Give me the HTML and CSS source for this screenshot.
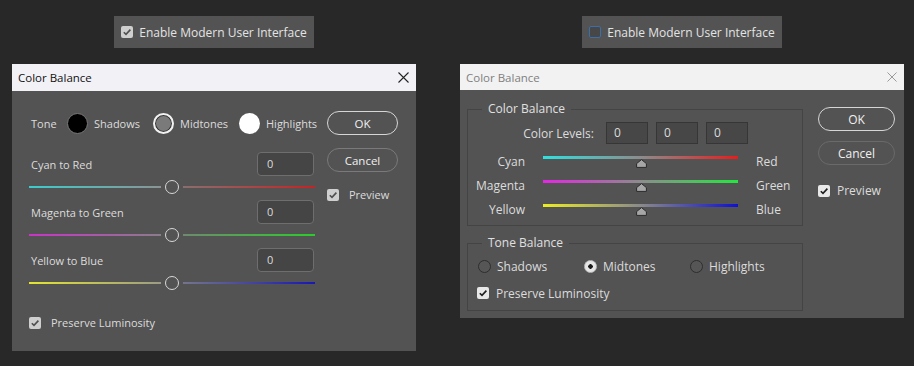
FILE: index.html
```html
<!DOCTYPE html>
<html lang="en">
<head>
    <meta charset="UTF-8">
    <title>Color Balance</title>
    <link rel="stylesheet" href="styles.css">
</head>
<body>

<!-- new look -->
<div class="col">
    <div class="ui-toggle">
        <span class="cb cb-on"><svg viewBox="0 0 12 12"><polyline points="2.8,6.2 5,8.4 9.4,3.6"/></svg></span>
        Enable Modern User Interface
    </div>

    <div class="dlg dlg-modern">
        <div class="titlebar">
            <span>Color Balance</span>
            <svg class="close" viewBox="0 0 11 11"><path d="M0.5 0.5 L10.5 10.5 M10.5 0.5 L0.5 10.5"/></svg>
        </div>
        <div class="dlg-body">
            <div class="main">
                <div class="tone-row">
                    <span class="tone-label">Tone</span>
                    <span class="tone"><span class="dot dot-black"></span>Shadows</span>
                    <span class="tone"><span class="dot dot-mid"></span>Midtones</span>
                    <span class="tone"><span class="dot dot-white"></span>Highlights</span>
                </div>

                <div class="field-row">
                    <span>Cyan to Red</span>
                    <span class="num">0</span>
                </div>
                <div class="slider cr"><span class="knob"></span></div>

                <div class="field-row">
                    <span>Magenta to Green</span>
                    <span class="num">0</span>
                </div>
                <div class="slider mg"><span class="knob"></span></div>

                <div class="field-row">
                    <span>Yellow to Blue</span>
                    <span class="num">0</span>
                </div>
                <div class="slider yb"><span class="knob"></span></div>

                <div class="check-row lum">
                    <span class="cb cb-on"><svg viewBox="0 0 12 12"><polyline points="2.8,6.2 5,8.4 9.4,3.6"/></svg></span>
                    Preserve Luminosity
                </div>
            </div>

            <div class="side">
                <div class="btn btn-ok">OK</div>
                <div class="btn btn-cancel">Cancel</div>
                <div class="check-row preview">
                    <span class="cb cb-on"><svg viewBox="0 0 12 12"><polyline points="2.8,6.2 5,8.4 9.4,3.6"/></svg></span>
                    Preview
                </div>
            </div>
        </div>
    </div>
</div>

<!-- old look -->
<div class="col">
    <div class="ui-toggle">
        <span class="cb cb-off"></span>
        Enable Modern User Interface
    </div>

    <div class="dlg dlg-legacy">
        <div class="titlebar">
            <span>Color Balance</span>
            <svg class="close" viewBox="0 0 11 11"><path d="M0.5 0.5 L10.5 10.5 M10.5 0.5 L0.5 10.5"/></svg>
        </div>
        <div class="dlg-body">
            <div class="main">
                <fieldset class="group">
                    <legend>Color Balance</legend>
                    <div class="levels">
                        <span class="levels-label">Color Levels:</span>
                        <span class="box">0</span>
                        <span class="box">0</span>
                        <span class="box">0</span>
                    </div>
                    <div class="bars">
                        <span class="lbl-l">Cyan</span>
                        <span class="bar cr"><svg class="tri" viewBox="0 0 11 9"><path d="M5.5 0.6 L10.4 4.6 V8.4 H0.6 V4.6 Z"/></svg></span>
                        <span class="lbl-r">Red</span>

                        <span class="lbl-l">Magenta</span>
                        <span class="bar mg"><svg class="tri" viewBox="0 0 11 9"><path d="M5.5 0.6 L10.4 4.6 V8.4 H0.6 V4.6 Z"/></svg></span>
                        <span class="lbl-r">Green</span>

                        <span class="lbl-l">Yellow</span>
                        <span class="bar yb"><svg class="tri" viewBox="0 0 11 9"><path d="M5.5 0.6 L10.4 4.6 V8.4 H0.6 V4.6 Z"/></svg></span>
                        <span class="lbl-r">Blue</span>
                    </div>
                </fieldset>

                <fieldset class="group group-tone">
                    <legend>Tone Balance</legend>
                    <div class="radios">
                        <span class="radio"><span class="ring"></span>Shadows</span>
                        <span class="radio"><span class="ring ring-on"></span>Midtones</span>
                        <span class="radio"><span class="ring"></span>Highlights</span>
                    </div>
                    <div class="check-row lum2">
                        <span class="cb cb-light"><svg viewBox="0 0 12 12"><polyline points="2.8,6.2 5,8.4 9.4,3.6"/></svg></span>
                        Preserve Luminosity
                    </div>
                </fieldset>
            </div>

            <div class="side">
                <div class="btn btn-ok">OK</div>
                <div class="btn btn-cancel">Cancel</div>
                <div class="check-row preview">
                    <span class="cb cb-light"><svg viewBox="0 0 12 12"><polyline points="2.8,6.2 5,8.4 9.4,3.6"/></svg></span>
                    Preview
                </div>
            </div>
        </div>
    </div>
</div>

</body>
</html>
```

FILE: styles.css
```css
body {
    margin: 0;
    padding: 16px 0 0 12px;
    display: flex;
    gap: 44px;
    background-color: #282828;
    font-family: "Open Sans", "Noto Sans", sans-serif;
    font-size: 12px;
    color: #dcdcdc;
}

.col {
    display: flex;
    flex-direction: column;
    align-items: center;
    gap: 16px;
}

/* toggle bar on top */
.ui-toggle {
    height: 32px;
    display: flex;
    align-items: center;
    gap: 6px;
    padding: 0 7px;
    background-color: #535353;
    color: #e4e4e4;
    font-size: 12px;
}

/* checkboxes */
.cb {
    width: 12px;
    height: 12px;
    border-radius: 2px;
    box-sizing: border-box;
    display: inline-block;
    flex: none;
}

.cb svg {
    display: block;
    width: 12px;
    height: 12px;
    fill: none;
    stroke-width: 1.6;
}

.cb-on {
    background-color: #cfcfcf;
}

.cb-on svg {
    stroke: #505050;
}

.cb-off {
    background-color: #474747;
    border: 1.5px solid #3c6ea8;
}

.cb-light {
    background-color: #e8e8e8;
}

.cb-light svg {
    stroke: #1e1e1e;
}

/* dialog frame */
.dlg {
    background-color: #535353;
}

.dlg-modern {
    width: 404px;
    font-size: 11px;
}

.dlg-legacy {
    width: 444px;
}

.titlebar {
    display: flex;
    align-items: center;
    justify-content: space-between;
    padding: 0 7px 0 6px;
    font-size: 11.5px;
}

.dlg-modern .titlebar {
    height: 27px;
    background-color: #f2f2f6;
    color: #111;
}

.dlg-legacy .titlebar {
    height: 26px;
    background-color: #f2f2f2;
    color: #808080;
}

.close {
    width: 11px;
    height: 11px;
    fill: none;
    stroke-width: 1.1;
}

.dlg-modern .close {
    stroke: #222;
}

.dlg-legacy .close {
    width: 10px;
    height: 10px;
    stroke: #9a9a9a;
}

.dlg-body {
    display: flex;
}

.dlg-modern .dlg-body {
    padding: 20px 18px 21px 17px;
    gap: 12px;
}

.dlg-modern .main {
    width: 286px;
}

.dlg-modern .side {
    width: 71px;
}

/* tone picker */
.tone-row {
    height: 24px;
    display: flex;
    align-items: center;
}

.tone-label {
    flex: none;
    width: 36px;
    padding-left: 2px;
}

.tone {
    flex: none;
    display: flex;
    align-items: center;
    gap: 6px;
    width: 86px;
}

.tone:last-child {
    width: auto;
}

.dot {
    flex: none;
    width: 21px;
    height: 21px;
    border-radius: 50%;
    box-sizing: border-box;
}

.dot-black {
    background-color: #000;
    border: 1px solid #777;
}

.dot-mid {
    background-color: #7a7a7a;
    border: 2px solid #f2f2f2;
    box-shadow: inset 0 0 0 1px #333;
}

.dot-white {
    background-color: #fff;
}

.field-row {
    margin-top: 17px;
    height: 24px;
    display: flex;
    align-items: center;
    justify-content: space-between;
    padding-left: 2px;
}

.field-row + .slider + .field-row {
    margin-top: 6px;
}

.num {
    width: 57px;
    height: 24px;
    box-sizing: border-box;
    margin-right: 1px;
    padding-left: 9px;
    line-height: 22px;
    background-color: #454545;
    border: 1px solid #6e6e6e;
    border-radius: 4px;
}

/* modern sliders */
.slider {
    position: relative;
    margin-top: 4px;
    height: 14px;
}

.slider::before {
    content: "";
    position: absolute;
    left: 0;
    right: 0;
    top: 6px;
    height: 2px;
}

.slider.cr::before {
    background: linear-gradient(to right, #3ccccc, #8a9494 46%, transparent 46%, transparent 54%, #8a6e6e 54%, #c42424);
}

.slider.mg::before {
    background: linear-gradient(to right, #c834c8, #8c7c8c 46%, transparent 46%, transparent 54%, #6e8a6e 54%, #2ccc2c);
}

.slider.yb::before {
    background: linear-gradient(to right, #e4e430, #9c9c84 46%, transparent 46%, transparent 54%, #74748e 54%, #1818b4);
}

.knob {
    position: absolute;
    left: 50%;
    top: 0;
    width: 14px;
    height: 14px;
    margin-left: -7px;
    box-sizing: border-box;
    border: 1.5px solid #d8d8d8;
    border-radius: 50%;
}

.check-row {
    display: flex;
    align-items: center;
}

.lum {
    margin-top: 25px;
    gap: 10px;
}

/* buttons */
.btn {
    height: 24px;
    box-sizing: border-box;
    border-radius: 12px;
    display: flex;
    align-items: center;
    justify-content: center;
    color: #f0f0f0;
}

.dlg-modern .btn {
    font-size: 11.5px;
}

.btn-ok {
    border: 1px solid #d6d6d6;
}

.btn-cancel {
    margin-top: 13px;
    border: 1px solid #7a7a7a;
}

.preview {
    margin-top: 15px;
    gap: 10px;
}

/* legacy dialog */
.dlg-legacy .dlg-body {
    padding: 11px 9px 7px 7px;
    gap: 15px;
}

.dlg-legacy .main {
    width: 336px;
}

.dlg-legacy .side {
    width: 77px;
    padding-top: 6px;
}

.dlg-legacy .btn-cancel {
    margin-top: 10px;
    border-color: #6a6a6a;
}

.dlg-legacy .preview {
    margin-top: 17px;
    gap: 7px;
}

.group {
    margin: 0;
    padding: 0 0 4px 0;
    border: 1px solid #444;
    min-width: 0;
}

.group legend {
    margin-left: 14px;
    padding: 0 6px;
    line-height: 16px;
    color: #e0e0e0;
}

.group-tone {
    margin-top: 9px;
    padding-bottom: 7px;
}

.levels {
    margin-top: 5px;
    height: 22px;
    display: flex;
    align-items: center;
    gap: 8px;
}

.levels-label {
    width: 126px;
    text-align: right;
    margin-right: 4px;
}

.box {
    width: 42px;
    height: 22px;
    box-sizing: border-box;
    padding-left: 7px;
    line-height: 20px;
    background-color: #474747;
    border: 1px solid #363636;
}

.bars {
    margin-top: 5px;
    display: grid;
    grid-template-columns: 57px 195px auto;
    grid-auto-rows: 24px;
    column-gap: 18px;
    align-items: center;
}

.lbl-l {
    text-align: right;
}

.bar {
    position: relative;
    height: 24px;
}

.bar::before {
    content: "";
    position: absolute;
    left: 0;
    right: 0;
    top: 7px;
    height: 3px;
}

.bar.cr::before {
    background: linear-gradient(to right, #2ee0e0, #8c8c8c 50%, #e81c1c);
}

.bar.mg::before {
    background: linear-gradient(to right, #e426e4, #8c8c8c 50%, #22e83e);
}

.bar.yb::before {
    background: linear-gradient(to right, #ecec22, #8a8a8a 50%, #1010d4);
}

.tri {
    position: absolute;
    left: 50%;
    top: 10px;
    width: 11px;
    height: 9px;
    margin-left: -5px;
    fill: #a6a6a6;
    stroke: #2a2a2a;
    stroke-width: 1;
}

.radios {
    margin-top: 5px;
    height: 20px;
    padding-left: 10px;
    display: grid;
    grid-template-columns: 106px 106px auto;
    align-items: center;
}

.radio {
    display: flex;
    align-items: center;
    gap: 6px;
}

.ring {
    width: 13px;
    height: 13px;
    box-sizing: border-box;
    border-radius: 50%;
    border: 1px solid #2e2e2e;
    background-color: #565656;
}

.ring-on {
    background: radial-gradient(circle, #1a1a1a 0 2px, #e6e6e6 2.5px);
    border-color: #bdbdbd;
}

.lum2 {
    margin-top: 7px;
    height: 20px;
    padding-left: 9px;
    gap: 7px;
}
```
